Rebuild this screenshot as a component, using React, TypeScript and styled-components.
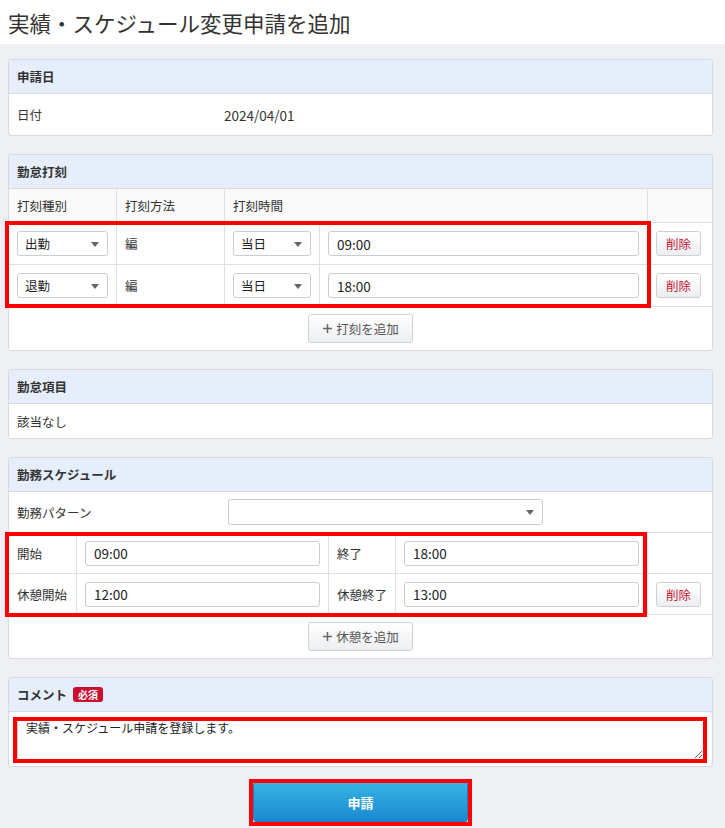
import styled, { createGlobalStyle } from 'styled-components';

const GlobalStyle = createGlobalStyle`
  body {
    margin: 0;
    background: #eff0f4;
    font-family: "Noto Sans CJK JP", "Noto Sans", sans-serif;
    font-size: 12.5px;
    color: #333;
  }
  * { box-sizing: border-box; }
`;

const TitleBar = styled.h1`
  margin: 0;
  height: 44px;
  background: #fff;
  padding: 0 8px;
  display: flex;
  align-items: center;
  font-size: 21.5px;
  font-weight: normal;
  color: #333;
`;

const Main = styled.main`
  width: 725px;
  padding: 15px 12px 10px 8px;
  display: flex;
  flex-direction: column;
  gap: 18px;
`;

const Panel = styled.section`
  background: #fff;
  border: 1px solid #d6d9de;
  border-radius: 3px;
`;

const PanelHeader = styled.div`
  height: 34px;
  background: #e5eefa;
  border-bottom: 1px solid #d6d9de;
  border-radius: 3px 3px 0 0;
  padding: 0 8px;
  display: flex;
  align-items: center;
  gap: 6px;
  font-weight: bold;
  color: #333;
`;

const Badge = styled.span`
  display: inline-flex;
  align-items: center;
  justify-content: center;
  height: 15px;
  padding: 0 5px;
  background: #c8102e;
  color: #fff;
  font-size: 10px;
  font-weight: bold;
  border-radius: 3px;
`;

const InfoRow = styled.div<{ $height?: number; $cols?: string }>`
  height: ${({ $height }) => $height ?? 41}px;
  padding: 0 8px;
  display: grid;
  grid-template-columns: ${({ $cols }) => $cols ?? '1fr'};
  align-items: center;
`;

const DateValue = styled.span`
  font-size: 13.5px;
`;

const Row = styled.div<{ $cols: string; $height: number; $shade?: boolean }>`
  display: grid;
  grid-template-columns: ${({ $cols }) => $cols};
  height: ${({ $height }) => $height}px;
  border-bottom: 1px solid #dcdfe3;
  background: ${({ $shade }) => ($shade ? '#fafafa' : '#fff')};
`;

const Cell = styled.div<{ $last?: boolean; $flush?: boolean }>`
  display: flex;
  align-items: center;
  padding: 0 ${({ $flush }) => ($flush ? 0 : 8)}px;
  border-right: ${({ $last }) => ($last ? 'none' : '1px solid #dcdfe3')};
`;

const Group = styled.div`
  position: relative;
`;

const Highlight = styled.div`
  position: absolute;
  border: 4px solid #ff0000;
  pointer-events: none;
`;

const SelectBox = styled.div<{ $w: number; $h?: number }>`
  position: relative;
  width: ${({ $w }) => $w}px;
  height: ${({ $h }) => $h ?? 25}px;
  border: 1px solid #c9ccd1;
  border-radius: 3px;
  background: #fff;
  padding: 0 7px;
  display: flex;
  align-items: center;
  color: #222;

  &::after {
    content: '';
    position: absolute;
    right: 8px;
    top: 50%;
    margin-top: -2px;
    border-left: 4px solid transparent;
    border-right: 4px solid transparent;
    border-top: 5px solid #666;
  }
`;

const TextInput = styled.div`
  width: 100%;
  height: 25px;
  border: 1px solid #c9ccd1;
  border-radius: 3px;
  padding: 0 8px;
  display: flex;
  align-items: center;
  color: #222;
  font-size: 13.5px;
`;

const GrayButton = styled.button<{ $danger?: boolean }>`
  height: ${({ $danger }) => ($danger ? 25 : 29)}px;
  padding: 0 ${({ $danger }) => ($danger ? 9 : 13)}px;
  border: 1px solid #cdd0d4;
  border-radius: 3px;
  background: linear-gradient(#ffffff, #eceef1);
  color: ${({ $danger }) => ($danger ? '#c8102e' : '#555')};
  font-family: inherit;
  font-size: 12.5px;
  display: inline-flex;
  align-items: center;
  gap: 3px;
  cursor: pointer;
`;

const AddRow = styled.div`
  height: 43px;
  display: flex;
  justify-content: center;
  padding-top: 7px;
`;

const CommentBody = styled.div`
  padding: 5px 8px 6px;
`;

const CommentArea = styled.textarea`
  display: block;
  width: 100%;
  height: 43px;
  border: 1px solid #c9ccd1;
  border-radius: 3px;
  padding: 1px 8px;
  font-family: inherit;
  font-size: 12px;
  color: #222;
`;

const SubmitWrap = styled.div`
  display: flex;
  justify-content: center;
  margin-top: -3px;
`;

const SubmitButton = styled.button`
  width: 215px;
  height: 40px;
  border: 1px solid #1c7fc2;
  border-radius: 3px;
  background: linear-gradient(#36b4e4, #1a88d1);
  color: #fff;
  font-family: inherit;
  font-size: 13px;
  font-weight: bold;
  cursor: pointer;
`;

const Plus = () => (
  <svg width="11" height="11" viewBox="0 0 11 11">
    <path d="M5.5 1v9M1 5.5h9" stroke="#666" strokeWidth="1.5" />
  </svg>
);

const stampCols = '108px 108px 95px 328px 64px';
const schedCols = '68px 252px 67px 252px 64px';

const stamps = [
  { kind: '出勤', time: '09:00' },
  { kind: '退勤', time: '18:00' },
];

export default function App() {
  return (
    <>
      <GlobalStyle />
      <TitleBar>実績・スケジュール変更申請を追加</TitleBar>
      <Main>
        <Panel>
          <PanelHeader>申請日</PanelHeader>
          <InfoRow $cols="207px 1fr">
            <span>日付</span>
            <DateValue>2024/04/01</DateValue>
          </InfoRow>
        </Panel>

        <Panel>
          <PanelHeader>勤怠打刻</PanelHeader>
          <Row $cols="108px 108px 423px 64px" $height={34} $shade>
            <Cell>打刻種別</Cell>
            <Cell>打刻方法</Cell>
            <Cell>打刻時間</Cell>
            <Cell $last />
          </Row>
          <Group>
            {stamps.map((s) => (
              <Row key={s.kind} $cols={stampCols} $height={42}>
                <Cell>
                  <SelectBox $w={93}>{s.kind}</SelectBox>
                </Cell>
                <Cell>編</Cell>
                <Cell>
                  <SelectBox $w={79}>当日</SelectBox>
                </Cell>
                <Cell>
                  <TextInput>{s.time}</TextInput>
                </Cell>
                <Cell $last>
                  <GrayButton $danger>削除</GrayButton>
                </Cell>
              </Row>
            ))}
            <Highlight style={{ left: -4, top: -2, width: 646, height: 87 }} />
          </Group>
          <AddRow>
            <GrayButton>
              <Plus />
              打刻を追加
            </GrayButton>
          </AddRow>
        </Panel>

        <Panel>
          <PanelHeader>勤怠項目</PanelHeader>
          <InfoRow $height={34}>
            <span>該当なし</span>
          </InfoRow>
        </Panel>

        <Panel>
          <PanelHeader>勤務スケジュール</PanelHeader>
          <Row $cols="219px 315px 1fr" $height={41}>
            <Cell $last>勤務パターン</Cell>
            <Cell $last $flush>
              <SelectBox $w={315} $h={26} />
            </Cell>
            <Cell $last />
          </Row>
          <Group>
            <Row $cols={schedCols} $height={41}>
              <Cell>開始</Cell>
              <Cell>
                <TextInput>09:00</TextInput>
              </Cell>
              <Cell>終了</Cell>
              <Cell>
                <TextInput>18:00</TextInput>
              </Cell>
              <Cell $last />
            </Row>
            <Row $cols={schedCols} $height={41}>
              <Cell>休憩開始</Cell>
              <Cell>
                <TextInput>12:00</TextInput>
              </Cell>
              <Cell>休憩終了</Cell>
              <Cell>
                <TextInput>13:00</TextInput>
              </Cell>
              <Cell $last>
                <GrayButton $danger>削除</GrayButton>
              </Cell>
            </Row>
            <Highlight style={{ left: -4, top: -1, width: 642, height: 85 }} />
          </Group>
          <AddRow>
            <GrayButton>
              <Plus />
              休憩を追加
            </GrayButton>
          </AddRow>
        </Panel>

        <Panel>
          <PanelHeader>
            コメント<Badge>必須</Badge>
          </PanelHeader>
          <CommentBody>
            <Group>
              <CommentArea defaultValue="実績・スケジュール申請を登録します。" />
              <Highlight style={{ left: -4, top: 0, width: 694, height: 46 }} />
            </Group>
          </CommentBody>
        </Panel>

        <SubmitWrap>
          <Group>
            <SubmitButton>申請</SubmitButton>
            <Highlight style={{ left: -4, top: -3, width: 223, height: 47 }} />
          </Group>
        </SubmitWrap>
      </Main>
    </>
  );
}
